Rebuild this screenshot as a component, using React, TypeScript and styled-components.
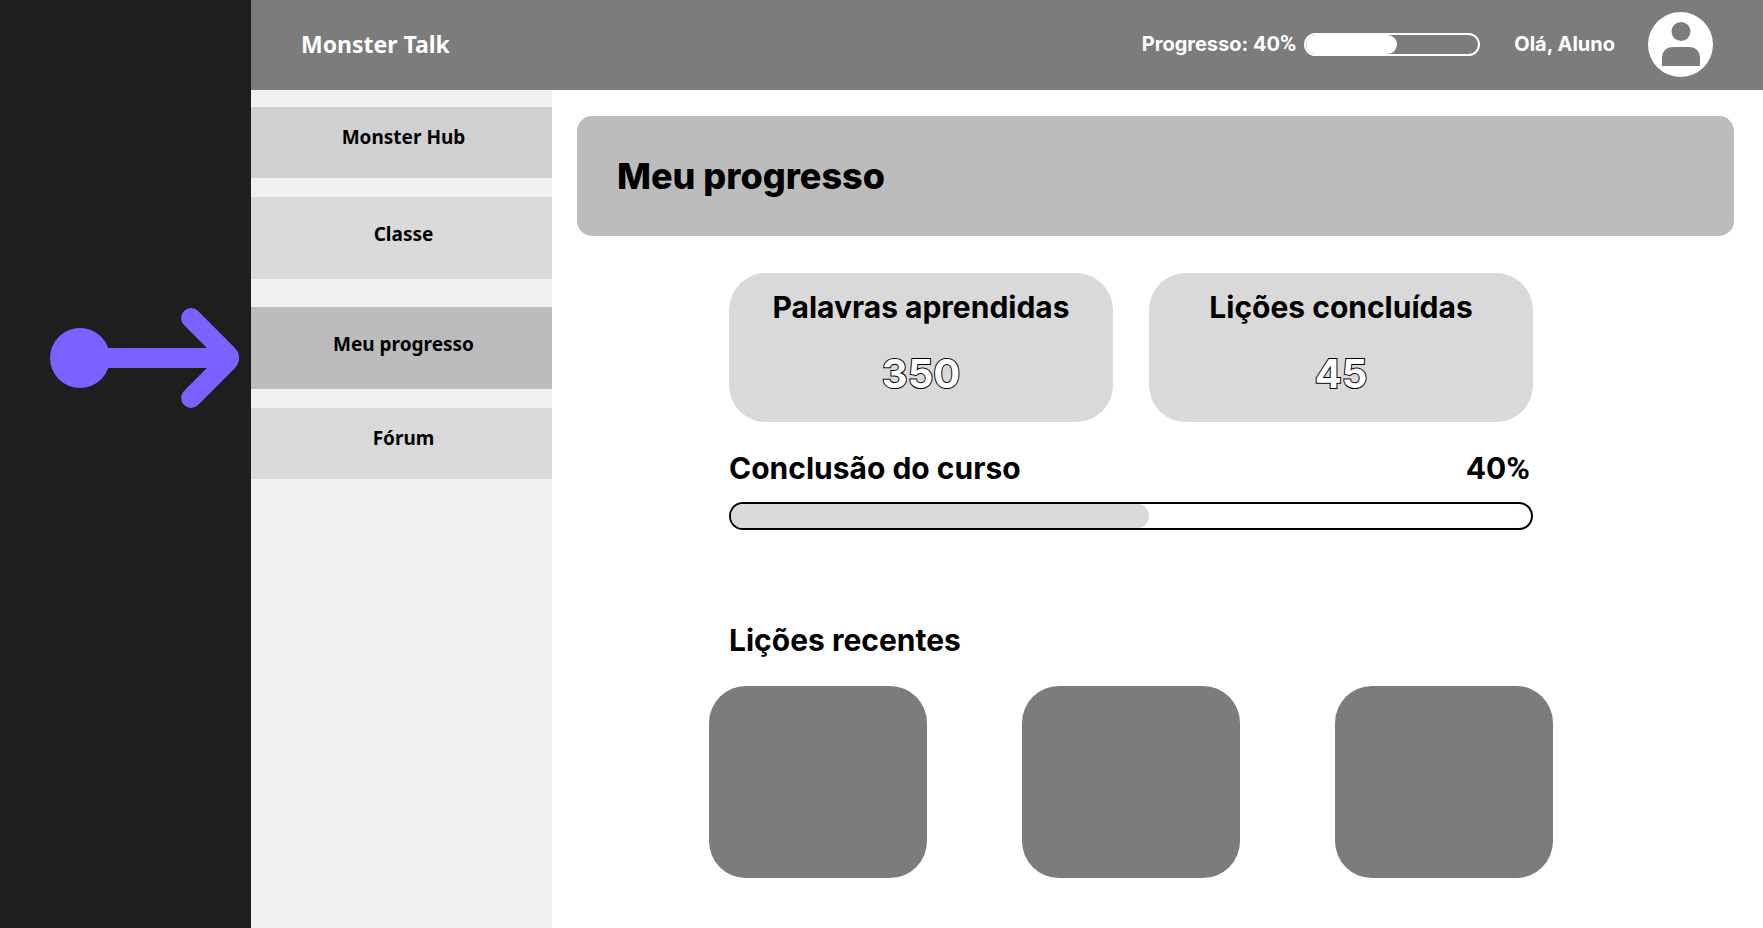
import React from "react";
import styled, { createGlobalStyle } from "styled-components";

const GlobalStyle = createGlobalStyle`
  *, *::before, *::after { box-sizing: border-box; }
  body {
    margin: 0;
    background: #fff;
    color: #000;
    font-family: Inter, "Liberation Sans", sans-serif;
  }
  h1, h2, p, ul { margin: 0; padding: 0; }
  ul { list-style: none; }
`;

const Page = styled.div`
  display: grid;
  grid-template-columns: 251px minmax(0, 1fr);
  min-height: 100vh;
`;

const Margin = styled.aside`
  background: #1e1e1e;
  padding: 308px 12px 0 50px;

  svg { display: block; }
`;

const Screen = styled.div`
  display: flex;
  flex-direction: column;
`;

const Header = styled.header`
  display: flex;
  align-items: center;
  height: 90px;
  padding: 0 50px 2px;
  background: #7c7c7c;
  color: #fff;
  font-size: 20px;
  line-height: 24px;
  font-weight: 700;
`;

const Brand = styled.a`
  margin-right: auto;
  color: inherit;
  text-decoration: none;
  font-family: "Noto Sans", sans-serif;
  font-size: 23px;
  line-height: 28px;
`;

const HeaderProgress = styled.div`
  display: flex;
  align-items: center;
  gap: 8px;
  margin-right: 34px;
`;

const Greeting = styled.p`
  margin-right: 33px;
`;

const PercentSign = styled.span<{ $size: number }>`
  font-family: Roboto, sans-serif;
  font-size: ${(p) => p.$size}px;
  line-height: 0;
`;

const Avatar = styled.svg`
  display: block;
  width: 65px;
  height: 65px;
`;

const Body = styled.div`
  flex: 1;
  display: grid;
  grid-template-columns: 301px minmax(0, 1fr);
`;

const Sidebar = styled.nav`
  display: flex;
  flex-direction: column;
  gap: 28px;
  padding-top: 17px;
  background: #f0f0f0;
`;

const NavGroup = styled.div`
  display: flex;
  flex-direction: column;
  gap: 19px;
`;

const NavItem = styled.a<{ $color: string; $tall?: boolean }>`
  display: block;
  padding: ${(p) => (p.$tall ? "25px 0 33px 4px" : "18px 0 29px 4px")};
  background: ${(p) => p.$color};
  color: #000;
  text-align: center;
  text-decoration: none;
  font-family: "Noto Sans", sans-serif;
  font-size: 19px;
  line-height: 24px;
  font-weight: 700;
`;

const Main = styled.main`
  padding: 26px 29px 48px 25px;
`;

const Banner = styled.div`
  display: flex;
  align-items: center;
  height: 120px;
  padding: 0 40px;
  border-radius: 15px;
  background: #bcbcbc;
`;

const Title = styled.h1`
  font-size: 36px;
  line-height: 44px;
  font-weight: 800;
`;

const Content = styled.div`
  padding: 37px 181px 0 132px;
`;

const Summary = styled.div`
  padding: 0 20px;
`;

const StatRow = styled.div`
  display: flex;
  gap: 36px;
`;

const StatCard = styled.section`
  flex: 1;
  padding: 16px 0 24px;
  border-radius: 37px;
  background: #d9d9d9;
  text-align: center;
`;

const Heading = styled.h2`
  font-size: 30px;
  line-height: 36px;
  font-weight: 700;
`;

const StatValue = styled.p`
  margin-top: 25px;
  color: #fff;
  font-size: 40px;
  line-height: 48px;
  font-weight: 700;
  -webkit-text-stroke: 2px #000;
  paint-order: stroke fill;
`;

const CourseRow = styled.div`
  display: flex;
  justify-content: space-between;
  margin: 28px 0 16px;
  padding-right: 3px;
`;

const CoursePercent = styled.p`
  font-size: 30px;
  line-height: 36px;
  font-weight: 700;
`;

const Track = styled.div<{ $small?: boolean }>`
  overflow: hidden;
  width: ${(p) => (p.$small ? "176px" : "100%")};
  height: ${(p) => (p.$small ? "23px" : "28px")};
  border: 2px solid ${(p) => (p.$small ? "#fff" : "#000")};
  border-radius: 14px;
`;

const Fill = styled.div<{ $color: string }>`
  height: 100%;
  border-radius: 0 12px 12px 0;
  background: ${(p) => p.$color};
`;

const Recent = styled.section`
  margin-top: 92px;

  ${Heading} { padding-left: 20px; }
`;

const LessonList = styled.ul`
  display: flex;
  gap: 95px;
  margin-top: 28px;
`;

const Lesson = styled.li`
  flex: 1;
  height: 192px;
  border-radius: 37px;
  background: #7c7c7c;
`;

const stats = [
  { label: "Palavras aprendidas", value: 350 },
  { label: "Lições concluídas", value: 45 },
];

const lessons = [1, 2, 3];

interface ProgressProps {
  labelledBy: string;
  filled: number;
  color: string;
  small?: boolean;
}

function Progress({ labelledBy, filled, color, small }: ProgressProps) {
  return (
    <Track
      $small={small}
      role="progressbar"
      aria-labelledby={labelledBy}
      aria-valuenow={40}
      aria-valuemin={0}
      aria-valuemax={100}
    >
      <Fill $color={color} style={{ width: `${filled}%` }} />
    </Track>
  );
}

export default function App() {
  return (
    <>
      <GlobalStyle />
      <Page>
        <Margin>
          <svg width="189" height="100" viewBox="0 0 189 100" fill="#7b61ff" aria-hidden="true">
            <circle cx="30" cy="50" r="30" />
            <path d="M30 40H156.9L133.93 17.07A10 10 0 0 1 148.07 2.93L185 40A14.14 14.14 0 0 1 185 60L148.07 97.07A10 10 0 0 1 133.93 82.93L156.9 60H30Z" />
          </svg>
        </Margin>
        <Screen>
          <Header>
            <Brand href="#inicio">Monster Talk</Brand>
            <HeaderProgress>
              <span id="header-progress">
                Progresso: 40<PercentSign $size={22}>%</PercentSign>
              </span>
              <Progress labelledBy="header-progress" filled={53} color="#fff" small />
            </HeaderProgress>
            <Greeting>Olá, Aluno</Greeting>
            <Avatar viewBox="0 0 65 65" aria-hidden="true">
              <circle cx="32.5" cy="32.5" r="32.5" fill="#fff" />
              <circle cx="33" cy="19.5" r="9.5" fill="#7c7c7c" />
              <path d="M14 54V45A10 10 0 0 1 24 35H42A10 10 0 0 1 52 45V54Z" fill="#7c7c7c" />
            </Avatar>
          </Header>
          <Body>
            <Sidebar>
              <NavGroup>
                <NavItem href="#hub" $color="#d0d0d0">Monster Hub</NavItem>
                <NavItem href="#classe" $color="#d9d9d9" $tall>Classe</NavItem>
              </NavGroup>
              <NavGroup>
                <NavItem href="#progresso" $color="#bcbcbc" $tall aria-current="page">Meu progresso</NavItem>
                <NavItem href="#forum" $color="#d9d9d9">Fórum</NavItem>
              </NavGroup>
            </Sidebar>
            <Main>
              <Banner>
                <Title>Meu progresso</Title>
              </Banner>
              <Content>
                <Summary>
                  <StatRow>
                    {stats.map((stat) => (
                      <StatCard key={stat.label}>
                        <Heading>{stat.label}</Heading>
                        <StatValue>{stat.value}</StatValue>
                      </StatCard>
                    ))}
                  </StatRow>
                  <CourseRow>
                    <Heading id="course-progress">Conclusão do curso</Heading>
                    <CoursePercent>
                      40<PercentSign $size={32}>%</PercentSign>
                    </CoursePercent>
                  </CourseRow>
                  <Progress labelledBy="course-progress" filled={52.25} color="#d9d9d9" />
                </Summary>
                <Recent>
                  <Heading>Lições recentes</Heading>
                  <LessonList>
                    {lessons.map((lesson) => (
                      <Lesson key={lesson} />
                    ))}
                  </LessonList>
                </Recent>
              </Content>
            </Main>
          </Body>
        </Screen>
      </Page>
    </>
  );
}
